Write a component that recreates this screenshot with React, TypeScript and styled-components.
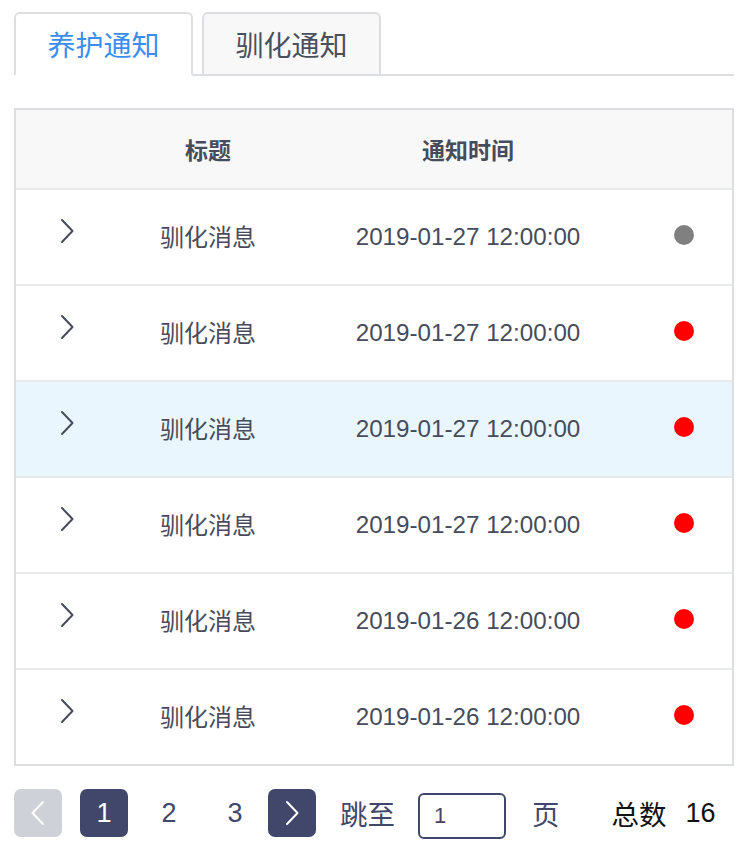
import React, { useState } from "react";
import styled, { createGlobalStyle } from "styled-components";

const GlobalStyle = createGlobalStyle`
  html, body {
    margin: 0;
    padding: 0;
    background: #fff;
  }
  body {
    font-family: "Liberation Sans", "Noto Sans CJK SC", sans-serif;
    color: #464c5b;
  }
`;

interface INotice {
  id: number;
  title: string;
  time: string;
  read: boolean;
}

const NOTICES: INotice[] = [
  { id: 1, title: "驯化消息", time: "2019-01-27 12:00:00", read: true },
  { id: 2, title: "驯化消息", time: "2019-01-27 12:00:00", read: false },
  { id: 3, title: "驯化消息", time: "2019-01-27 12:00:00", read: false },
  { id: 4, title: "驯化消息", time: "2019-01-27 12:00:00", read: false },
  { id: 5, title: "驯化消息", time: "2019-01-26 12:00:00", read: false },
  { id: 6, title: "驯化消息", time: "2019-01-26 12:00:00", read: false },
];

const Chevron = ({ dir = "right", color = "#464c5b" }: { dir?: "left" | "right"; color?: string }) => (
  <svg width="14" height="26" viewBox="0 0 14 26" fill="none">
    <path
      d={dir === "right" ? "M2 2 L12.5 13 L2 24" : "M12 2 L1.5 13 L12 24"}
      stroke={color}
      strokeWidth="2"
      strokeLinecap="round"
      strokeLinejoin="round"
    />
  </svg>
);

export default function App() {
  const [tab, setTab] = useState(0);
  const [page, setPage] = useState("1");
  return (
    <Page>
      <GlobalStyle />
      <TabBar>
        <Tab $active={tab === 0} onClick={() => setTab(0)}>
          养护通知
        </Tab>
        <Tab $active={tab === 1} onClick={() => setTab(1)}>
          驯化通知
        </Tab>
      </TabBar>

      <Table>
        <HeadRow>
          <span />
          <HeadCell>标题</HeadCell>
          <HeadCell>通知时间</HeadCell>
          <span />
        </HeadRow>
        {NOTICES.map((n) => (
          <Row key={n.id} $highlight={n.id === 3}>
            <ArrowCell>
              <Chevron />
            </ArrowCell>
            <TitleCell>{n.title}</TitleCell>
            <Cell>{n.time}</Cell>
            <Cell>
              <Dot $read={n.read} />
            </Cell>
          </Row>
        ))}
      </Table>

      <Pager>
        <PageButton $disabled>
          <Chevron dir="left" color="#fff" />
        </PageButton>
        <PageButton $gapAfter>1</PageButton>
        <PageNum>2</PageNum>
        <PageNum>3</PageNum>
        <PageButton>
          <Chevron color="#fff" />
        </PageButton>
        <PagerLabel $ml={24}>跳至</PagerLabel>
        <JumpInput value={page} onChange={(e) => setPage(e.target.value)} />
        <PagerLabel $ml={26}>页</PagerLabel>
        <Total>总数</Total>
        <TotalNum>16</TotalNum>
      </Pager>
    </Page>
  );
}

const Page = styled.div`
  width: 720px;
  padding: 12px 14px 0;
`;

const TabBar = styled.div`
  display: flex;
  gap: 9px;
  border-bottom: 2px solid #dcdee2;
  height: 62px;
`;

const Tab = styled.div<{ $active?: boolean }>`
  width: 175px;
  height: 60px;
  border: 2px solid #dcdee2;
  border-bottom: ${(p) => (p.$active ? "2px solid #fff" : "none")};
  border-radius: 6px 6px 0 0;
  background: ${(p) => (p.$active ? "#fff" : "#f8f8f9")};
  color: ${(p) => (p.$active ? "#3a8ef0" : "#4a4f5e")};
  font-family: "Noto Sans CJK SC", sans-serif;
  font-size: 28px;
  display: flex;
  align-items: center;
  justify-content: center;
  cursor: pointer;
  position: relative;
  z-index: 1;
`;

const Table = styled.div`
  margin-top: 32px;
  border: 2px solid #dcdee2;
`;

const grid = `
  display: grid;
  grid-template-columns: 100px 184px 336px 1fr;
`;

const HeadRow = styled.div`
  ${grid}
  height: 78px;
  align-items: center;
  background: #f8f8f9;
  border-bottom: 2px solid #e8eaec;
`;

const HeadCell = styled.div`
  text-align: center;
  font-family: "Noto Sans CJK SC", sans-serif;
  font-size: 23px;
  font-weight: 700;
  color: #464c5b;
`;

const Row = styled.div<{ $highlight?: boolean }>`
  ${grid}
  height: 94px;
  align-items: center;
  background: ${(p) => (p.$highlight ? "#e9f6fe" : "#fff")};
  border-bottom: 2px solid #e8eaec;
  &:last-child {
    border-bottom: none;
  }
`;

const Cell = styled.div`
  display: flex;
  justify-content: center;
  font-size: 24.2px;
  color: #464c5b;
`;

const TitleCell = styled(Cell)`
  font-family: "Noto Sans CJK SC", sans-serif;
  font-size: 24px;
  margin-top: -3px;
`;

const ArrowCell = styled.div`
  display: flex;
  justify-content: center;
  align-self: start;
  margin-top: 28px;
  padding-left: 1px;
`;

const Dot = styled.span<{ $read?: boolean }>`
  width: 20px;
  height: 20px;
  border-radius: 50%;
  background: ${(p) => (p.$read ? "#808080" : "#ff0000")};
  margin-top: -4px;
`;

const Pager = styled.div`
  display: flex;
  align-items: center;
  margin-top: 21px;
  font-size: 27px;
`;

const PageButton = styled.div<{ $disabled?: boolean; $gapAfter?: boolean }>`
  width: 48px;
  height: 48px;
  border-radius: 7px;
  background: ${(p) => (p.$disabled ? "#cfd1d8" : "#41476b")};
  color: #fff;
  display: flex;
  align-items: center;
  justify-content: center;
  margin-right: ${(p) => (p.$disabled ? "18px" : p.$gapAfter ? "8px" : "0")};
  cursor: pointer;
`;

const PageNum = styled.div`
  width: 66px;
  text-align: center;
  color: #41476b;
  cursor: pointer;
`;

const PagerLabel = styled.span<{ $ml: number }>`
  margin-left: ${(p) => p.$ml}px;
  color: #41476b;
  font-family: "Noto Sans CJK SC", sans-serif;
  font-size: 27.5px;
`;

const JumpInput = styled.input`
  box-sizing: border-box;
  margin-left: 23px;
  margin-top: 6px;
  width: 88px;
  height: 46px;
  border: 2px solid #41476b;
  border-radius: 6px;
  padding: 0 14px;
  font-family: "Liberation Sans", sans-serif;
  font-size: 22px;
  color: #41476b;
  outline: none;
`;

const Total = styled.span`
  margin-left: 52px;
  color: #111;
  font-family: "Noto Sans CJK SC", sans-serif;
  font-size: 27.5px;
`;

const TotalNum = styled.span`
  margin-left: 19px;
  color: #111;
`;
